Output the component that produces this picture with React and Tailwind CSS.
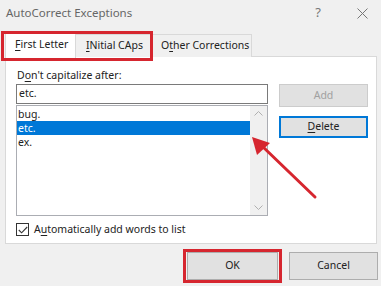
import React from "react";

const font = { fontFamily: '"Noto Sans", "Open Sans", Arial, sans-serif' };

function U({ children }) {
  return <span className="underline underline-offset-2 decoration-[1px]">{children}</span>;
}

function Tab({ selected, children, className = "" }) {
  return (
    <div
      className={
        selected
          ? `relative z-10 h-[27px] bg-white border border-b-0 border-[#d9d9d9] flex items-center px-[9px] text-[10.5px] text-[#222] whitespace-nowrap ${className}`
          : `mt-[3px] h-[23px] bg-[#f0f0f0] border border-b-0 border-[#d9d9d9] flex items-center px-[8px] text-[10.5px] text-[#222] whitespace-nowrap ${className}`
      }
    >
      {children}
    </div>
  );
}

export default function App() {
  return (
    <div className="relative w-[381px] h-[286px] bg-[#f0f0f0] overflow-hidden select-none whitespace-nowrap" style={font}>
      {/* title bar */}
      <div className="h-[26px] flex items-center pl-[6px] pr-[13px]">
        <span className="text-[11.5px] text-[#666]">AutoCorrect Exceptions</span>
        <span className="ml-auto text-[13px] text-[#777] mr-[36px]">?</span>
        <svg width="11" height="11" viewBox="0 0 11 11" className="text-[#777]">
          <path d="M0.5 0.5 L10.5 10.5 M10.5 0.5 L0.5 10.5" stroke="currentColor" strokeWidth="1" />
        </svg>
      </div>

      {/* tabs */}
      <div className="flex pl-[5px] mt-[5px] h-[26px]">
        <Tab selected className="w-[71px]">
          <span><U>F</U>irst Letter</span>
        </Tab>
        <Tab className="w-[76px] border-l-0">
          <span className="pl-[2px]"><U>I</U>Nitial CAps</span>
        </Tab>
        <Tab className="w-[100px] border-l-0">
          <span className="pl-[1px]">O<U>t</U>her Corrections</span>
        </Tab>
      </div>

      {/* panel */}
      <div className="ml-[5px] mr-[4px] -mt-px h-[188px] bg-white border border-[#d9d9d9] flex pl-[10px] pt-[10px]">
        <div className="w-[252px] flex flex-col">
          <div className="text-[10.5px] text-[#222] h-[16px] leading-[16px] pl-px">
            D<U>o</U>n't capitalize after:
          </div>
          <div className="mt-[1px] h-[20px] border border-[#7a7a7a] flex items-center pl-[2px] text-[10.5px] text-[#222]">
            etc.
          </div>
          <div className="mt-[1px] h-[111px] border border-[#abadb3] flex">
            <div className="flex-1 flex flex-col pt-[1px] text-[10.5px] leading-[14px] text-[#222]">
              <div className="h-[14px] pl-[1px]">bug.</div>
              <div className="h-[14px] pl-[1px] bg-[#0078d7] text-white">etc.</div>
              <div className="h-[14px] pl-[1px]">ex.</div>
            </div>
            <div className="w-[17px] bg-[#f0f0f0] flex flex-col items-center justify-between py-[5px]">
              <svg width="9" height="5" viewBox="0 0 9 5">
                <path d="M0.5 4.5 L4.5 0.5 L8.5 4.5" fill="none" stroke="#b0b0b0" strokeWidth="1" />
              </svg>
              <svg width="9" height="5" viewBox="0 0 9 5">
                <path d="M0.5 0.5 L4.5 4.5 L8.5 0.5" fill="none" stroke="#b0b0b0" strokeWidth="1" />
              </svg>
            </div>
          </div>
          <div className="mt-[6px] flex items-center gap-[5px]">
            <div className="w-[13px] h-[13px] border border-[#333] flex items-center justify-center">
              <svg width="10" height="8" viewBox="0 0 10 8">
                <path d="M0.8 4 L3.6 6.8 L9.2 1" fill="none" stroke="#333" strokeWidth="1.1" />
              </svg>
            </div>
            <span className="text-[10.5px] text-[#222]">A<U>u</U>tomatically add words to list</span>
          </div>
        </div>
        <div className="ml-[11px] pt-[17px] flex flex-col">
          <div className="w-[89px] h-[23px] bg-[#e1e1e1] border border-[#cccccc] flex items-center justify-center text-[10.5px] text-[#a0a0a0]">
            Add
          </div>
          <div className="mt-[9px] w-[89px] h-[22px] bg-[#e1e1e1] border-2 border-[#0078d7] flex items-center justify-center text-[10.5px] text-[#222]">
            <span><U>D</U>elete</span>
          </div>
        </div>
      </div>

      {/* bottom buttons */}
      <div className="flex pl-[183px] mt-[5px] items-center">
        <div className="w-[99px] h-[34px] border-[3px] border-[#d6262f] flex items-center justify-center">
          <div className="w-[91px] h-[28px] bg-[#e1e1e1] border border-[#adadad] flex items-center justify-center text-[10.5px] text-[#222]">
            OK
          </div>
        </div>
        <div className="ml-[7px] w-[89px] h-[28px] bg-[#e1e1e1] border border-[#adadad] flex items-center justify-center text-[10.5px] text-[#222]">
          Cancel
        </div>
      </div>

      {/* red highlight around tabs */}
      <div className="absolute left-[1px] top-[31px] w-[152px] h-[30px] border-[3px] border-[#d6262f] pointer-events-none z-20" />

      {/* arrow annotation */}
      <svg className="absolute left-0 top-0 pointer-events-none z-20" width="381" height="286" viewBox="0 0 381 286">
        <line x1="315" y1="197" x2="262" y2="146" stroke="#d6262f" strokeWidth="3" strokeLinecap="round" />
        <polygon points="252,137 270,143 257,155" fill="#d6262f" />
      </svg>
    </div>
  );
}
